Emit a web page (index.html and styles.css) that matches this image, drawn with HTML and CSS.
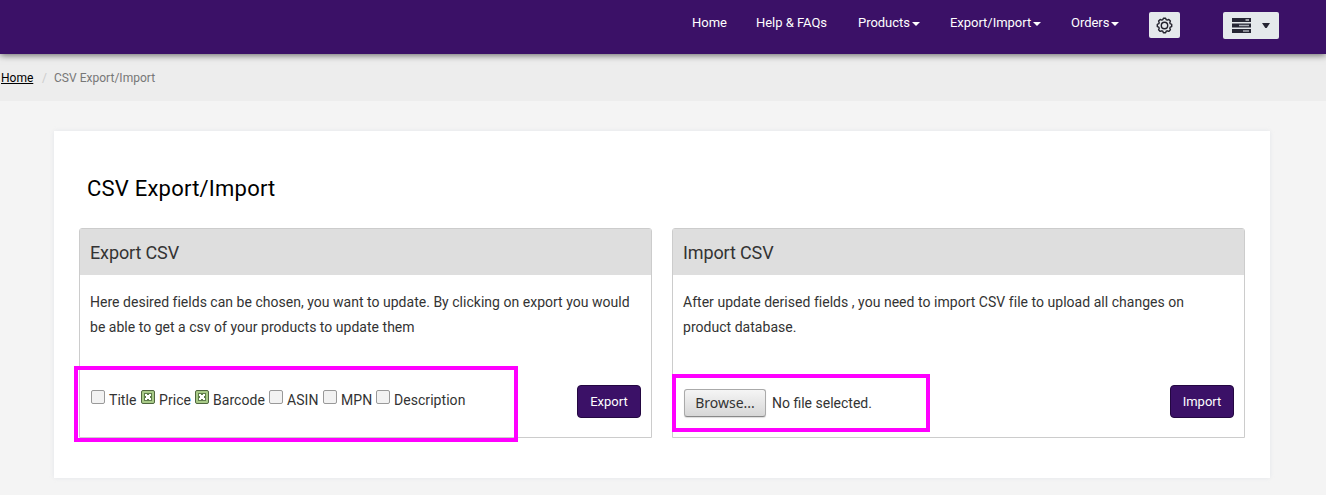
FILE: index.html
```html
<!DOCTYPE html>
<html lang="en">
<head>
<meta charset="utf-8">
<title>CSV Export/Import</title>
<link rel="stylesheet" href="styles.css">
</head>
<body>
<header class="navbar">
  <nav class="menu">
    <a class="item home">Home</a>
    <a class="item help">Help &amp; FAQs</a>
    <a class="item products">Products<i class="caret"></i></a>
    <a class="item exim">Export/Import<i class="caret"></i></a>
    <a class="item orders">Orders<i class="caret"></i></a>
  </nav>
  <button class="tool gear" aria-label="Settings">
    <svg width="17" height="17" viewBox="0 0 17 17" fill="none" stroke="#22222c" stroke-linejoin="round">
      <path stroke-width="1.4" d="M7.4 1.2h2.2l.6 1.5 1 .4 1.600-.6 1.600 1.600-.6 1.600.4 1 1.500.6v2.300l-1.500.6-.4 1 .6 1.600-1.600 1.600-1.600-.6-1 .4-.6 1.500H7.400l-.6-1.500-1-.4-1.600.6-1.600-1.600.6-1.600-.4-1-1.500-.6V7.300l1.500-.6.4-1-.6-1.600 1.600-1.600 1.600.6 1-.4z"/>
      <circle cx="8.500" cy="8.500" r="3.200" stroke-width="1.400"/>
    </svg>
  </button>
  <button class="tool server" aria-label="Server">
    <svg width="19" height="15" viewBox="0 0 19 15">
      <path fill="#262634" d="M0 0h19v4H0zM0 5.500h19v4H0zM0 11h19v4H0z"/>
      <path fill="#d4d7dc" d="M13.500 1.300H17v1.400h-3.500z"/>
      <path fill="#a9acb4" d="M7 6.800h10v1.400H7zM11 12.300h6v1.400h-6z"/>
    </svg>
    <svg width="8" height="6" viewBox="0 0 8 6"><path fill="#262634" d="M0 0h8L4.700 5H3.300z"/></svg>
  </button>
</header>
<div class="breadcrumb">
  <a class="crumb-home">Home</a><span class="slash">/</span><span class="crumb">CSV Export/Import</span>
</div>
<main class="card">
  <h1 class="title">CSV Export/Import</h1>
  <div class="panels">
    <section class="panel">
      <h2 class="panel-head">Export CSV</h2>
      <p class="text">Here desired fields can be chosen, you want to update. By clicking on export you would<br>be able to get a csv of your products to update them</p>
      <div class="controls">
        <div class="checks">
          <span class="check title-field"><i class="box"></i>Title</span>
          <span class="check price"><i class="box on"><svg width="12" height="12" viewBox="0 0 12 12"><path fill="#5f7d4c" d="M2 2h8v8H2z"/><path fill="#fff" d="M3 3h2v1h2V3h2v2H8v2h1v2H7V8H5v1H3V7h1V5H3z"/></svg></i>Price</span>
          <span class="check barcode"><i class="box on"><svg width="12" height="12" viewBox="0 0 12 12"><path fill="#5f7d4c" d="M2 2h8v8H2z"/><path fill="#fff" d="M3 3h2v1h2V3h2v2H8v2h1v2H7V8H5v1H3V7h1V5H3z"/></svg></i>Barcode</span>
          <span class="check asin"><i class="box"></i>ASIN</span>
          <span class="check mpn"><i class="box"></i>MPN</span>
          <span class="check desc"><i class="box"></i>Description</span>
        </div>
        <button class="action">Export</button>
      </div>
      <div class="highlight mark-fields"></div>
    </section>
    <section class="panel">
      <h2 class="panel-head">Import CSV</h2>
      <p class="text text-import">After update derised fields , you need to import CSV file to upload all changes on<br>product database.</p>
      <div class="controls">
        <div class="file"><button class="browse">Browse...</button><span class="nofile">No file selected.</span></div>
        <button class="action">Import</button>
      </div>
      <div class="highlight mark-file"></div>
    </section>
  </div>
</main>
</body>
</html>
```
FILE: styles.css
```css
* { box-sizing: border-box; }
html, body { height: 100%; overflow: hidden; }
body { margin: 0; background: #f4f4f4; color: #333; font-family: Roboto, sans-serif; font-size: 14px; }
button { font-family: inherit; margin: 0; padding: 0; }

.navbar { position: relative; display: flex; align-items: flex-start; height: 54px; padding-left: 692px; background: #3b1167; box-shadow: 0 1px 7px rgba(0,0,0,.6); }
.menu { display: flex; width: 457px; line-height: 20px; padding-top: 13px; font-size: 13px; letter-spacing: -.03px; color: #fff; }
.item { white-space: nowrap; flex: none; }
.home { width: 64px; }
.help { width: 102px; }
.products { width: 92px; }
.exim { width: 121px; }
.caret { display: inline-block; margin-left: 2px; vertical-align: 1px; border: 4px solid transparent; border-top-color: #fff; border-bottom: 0; }
.tool { display: flex; align-items: center; justify-content: center; flex: none; margin-top: 12px; border: 0; border-radius: 2px; background: #e5e9ec; }
.gear { width: 31px; height: 26px; }
.server { width: 56px; height: 27px; margin-left: 43px; gap: 11px; }

.breadcrumb { display: flex; height: 47px; padding: 14px 0 0 1px; line-height: 20px; background: #ededed; font-size: 12px; }
.crumb-home { width: 41px; color: #000; text-decoration: underline; }
.slash { width: 12px; color: #ccc; }
.crumb { color: #777; letter-spacing: .02px; }

.card { width: 1216px; height: 347px; margin: 30px 0 0 54px; padding: 43px 25px 0; background: #fff; box-shadow: 0 0 4px rgba(200,210,220,.35); }
.title { margin: 0 0 24px 8px; line-height: 30px; font-size: 22px; font-weight: 400; letter-spacing: .22px; color: #000; }
.panels { display: flex; gap: 20px; }
.panel { position: relative; width: 573px; height: 210px; border: 1px solid #ccc; border-radius: 3px 3px 0 0; }
.panel-head { margin: 0; height: 46px; padding-left: 10px; line-height: 47px; background: #dedede; font-size: 18px; font-weight: 400; letter-spacing: -.13px; }
.text { margin: 15px 0 0 10px; line-height: 25px; white-space: nowrap; letter-spacing: .02px; }
.text-import { letter-spacing: .03px; }
.controls { display: flex; justify-content: space-between; margin: 45px 10px 0 11px; }
.checks { display: flex; padding-top: 5px; line-height: 20px; letter-spacing: .05px; }
.check { display: flex; gap: 4px; white-space: nowrap; }
.title-field { width: 50px; }
.price { width: 54px; }
.barcode { width: 74px; }
.asin { width: 54px; }
.mpn { width: 53px; }
.box { display: flex; flex: none; width: 14px; height: 14px; border: 1px solid #999; border-radius: 2px; background: #f2f2f2; }
.on { border-color: #4f663f; background: #a9cb88; }
.action { width: 64px; height: 33px; border: 1px solid #230741; border-radius: 4px; background: #3b1167; color: #fff; font-size: 13px; letter-spacing: 0; }
.file { display: flex; align-items: flex-start; padding-top: 4px; }
.browse { width: 82px; height: 28px; padding-bottom: 2px; border: 1px solid #aaa; border-bottom-color: #888; border-radius: 3px; background: linear-gradient(#f5f5f5, #d7d7d7); box-shadow: 0 1px 1px #ddd; color: #333; font: 14px "Noto Sans", sans-serif; }
.nofile { margin-left: 6px; line-height: 29px; }
.highlight { position: absolute; border: 4px solid #f0f; }
.mark-fields { left: -6px; top: 137px; width: 444px; height: 76px; }
.mark-file { left: -1px; top: 145px; width: 258px; height: 58px; }
```
